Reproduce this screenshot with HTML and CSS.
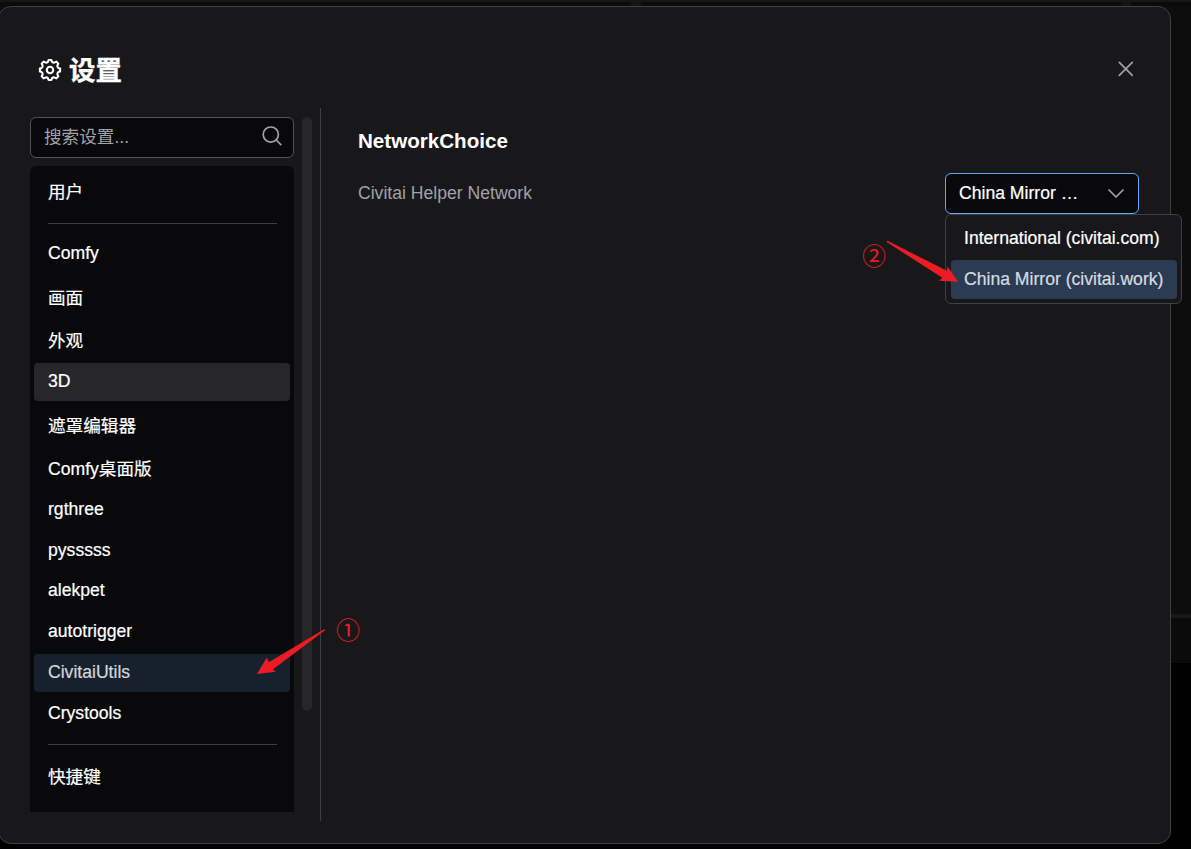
FILE: index.html
```html
<!DOCTYPE html>
<html lang="zh-CN">
<head>
<meta charset="utf-8">
<title>设置</title>
<link rel="stylesheet" href="styles.css">
</head>
<body>
<div class="backdrop">
  <div class="tabstrip"><i></i><i></i></div>
  <div class="canvas"></div>
  <div class="dock"></div>
</div>
<main class="dialog">
  <header class="dialog-header">
    <svg class="gear" width="24" height="24" viewBox="0 0 24 24"><path d="M9.9 4 L10.6 2 H13.4 L14.1 4 Q15.5 5.1 16.8 4.4 L18.4 3.6 L20.3 5.6 L19.5 7.2 Q18.9 9 20.3 9.9 L22.1 10.6 V13.4 L20.3 14.1 Q18.9 15 19.5 16.8 L20.3 18.4 L18.4 20.4 L16.8 19.6 Q15.5 18.9 14.1 20 L13.4 22 H10.6 L9.9 20 Q8.5 18.9 7.2 19.6 L5.6 20.4 L3.7 18.4 L4.5 16.8 Q5.1 15 3.7 14.1 L1.9 13.4 V10.6 L3.7 9.9 Q5.1 9 4.5 7.2 L3.7 5.6 L5.6 3.6 L7.2 4.4 Q8.5 5.1 9.9 4Z"/><circle cx="12" cy="12" r="3.2"/></svg>
    <h1>设置</h1>
    <svg class="close" width="16" height="16" viewBox="0 0 16 16"><path d="M2.3 1.3 15.3 14.3M15.3 1.3 2.3 14.3"/></svg>
  </header>
  <div class="dialog-body">
    <aside class="sidebar">
      <div class="search"><span>搜索设置...</span>
        <svg width="20" height="20" viewBox="0 0 20 20"><circle cx="8.8" cy="8.6" r="7.6"/><path d="M14.2 14 18.8 18.6"/></svg>
      </div>
      <ul class="menu">
        <li class="cjk">用户</li>
        <li class="divider"></li>
        <li>Comfy</li>
        <li class="cjk">画面</li>
        <li class="cjk">外观</li>
        <li class="hover">3D</li>
        <li class="cjk">遮罩编辑器</li>
        <li class="cjk">Comfy桌面版</li>
        <li>rgthree</li>
        <li>pysssss</li>
        <li>alekpet</li>
        <li>autotrigger</li>
        <li class="selected">CivitaiUtils</li>
        <li>Crystools</li>
        <li class="divider"></li>
        <li class="cjk">快捷键</li>
      </ul>
    </aside>
    <div class="scrollbar"></div>
    <section class="content">
      <h2>NetworkChoice</h2>
      <div class="setting">
        <label>Civitai Helper Network</label>
        <div class="select">
          <span>China Mirror …</span>
          <svg width="16" height="10" viewBox="0 0 16 10"><path d="M1 2 8 9 15 2"/></svg>
          <div class="options">
            <div class="option">International (civitai.com)</div>
            <div class="option chosen">China Mirror (civitai.work)</div>
          </div>
        </div>
      </div>
    </section>
  </div>
</main>
<svg class="arrows" width="1191" height="849" viewBox="0 0 1191 849">
  <path d="M324.5 629 324.8 630.5 273 669.3 275.8 671.8 257 674 266.8 657.5 268.8 662.3Z"/>
  <path d="M886.3 241.8 887.5 240.8 947 270.8 947.3 266 958 281.8 939 280.8 942.3 277.8Z"/>
</svg>
<span class="note note-one">①</span>
<span class="note note-two">②</span>
</body>
</html>
```
FILE: styles.css
```css
* { box-sizing: border-box; }
body {
  margin: 0;
  width: 1191px;
  height: 849px;
  overflow: hidden;
  position: relative;
  background: #000;
  color: #fff;
  font: 17.6px "Liberation Sans", "Noto Sans CJK SC", sans-serif;
}
.backdrop { position: absolute; inset: 0; display: flex; flex-direction: column; }
.tabstrip { height: 6px; background: #0b0b0b; border-top: 2px solid #171717; display: flex; padding-left: 631px; gap: 480px; }
.tabstrip i { width: 10px; background: #141415; }
.canvas { height: 608px; background: #0d0d0d; }
.dock { height: 49px; background: #0b0b0c; border-top: 4px solid #19191b; }
.dialog {
  position: absolute;
  left: -2px;
  top: 6px;
  width: 1173px;
  height: 838px;
  background: #18181a;
  border: 1px solid #3f3f46;
  border-radius: 13px;
}
.dialog-header { height: 101px; display: flex; align-items: center; padding: 25px 37px 0 39px; }
.gear { fill: none; stroke: #fff; stroke-width: 2.1; stroke-linejoin: round; margin-bottom: 1px; }
h1 { margin: 1px 0 0 7px; font-size: 26.4px; line-height: 30px; flex: 1; -webkit-text-stroke: 0.4px; }
.close { fill: none; stroke: #a1a1aa; stroke-width: 1.7; stroke-linecap: round; margin-bottom: 2px; }
.dialog-body { display: flex; height: 713px; }
.sidebar { width: 264px; margin: 9px 0 9px 31px; display: flex; flex-direction: column; gap: 8px; }
.search {
  height: 41px;
  flex: none;
  border: 1px solid #52525b;
  border-radius: 6px;
  background: #09090b;
  color: #a1a1aa;
  display: flex;
  align-items: center;
  justify-content: space-between;
  padding: 0 11px 3px 13px;
}
.search span { margin-bottom: 2px; }
.search svg { fill: none; stroke: #a1a1aa; stroke-width: 1.7; stroke-linecap: round; }
.menu {
  list-style: none;
  margin: 0;
  padding: 4.4px 4px 0;
  height: 646px;
  flex: none;
  overflow: hidden;
  background: #09090b;
  border-radius: 6px 6px 0 0;
}
.menu li { height: 38.2px; line-height: 37.4px; padding-left: 14px; margin-bottom: 2.6px; border-radius: 4px; -webkit-text-stroke: 0.2px; }
.menu li.cjk { height: 41px; line-height: 44px; }
.menu li.divider { height: 1px; background: #3f3f46; margin: 11.4px 13px 11px 14px; padding: 0; border-radius: 0; }
.menu li.cjk:last-child { line-height: 42.4px; }
.menu li.hover { background: #27272a; }
.menu li.selected { background: #17212e; color: #d4d5d8; }
.scrollbar { width: 10px; height: 594px; margin: 9px 8px 0; border-radius: 5px; background: #27272a; }
.content { flex: 1; border-left: 1px solid #3f3f46; padding: 20px 31px 0 37px; }
h2 { margin: 0; font-size: 20.6px; line-height: 26px; }
.setting { display: flex; justify-content: space-between; margin-top: 19px; }
.setting label { color: #a1a1aa; line-height: 40px; }
.select {
  position: relative;
  width: 194px;
  height: 41px;
  display: flex;
  align-items: center;
  justify-content: space-between;
  padding: 0 14px 1px 13px;
  border: 1px solid #60a5fa;
  border-radius: 6px;
  background: #09090b;
  -webkit-text-stroke: 0.2px;
}
.select > svg { fill: none; stroke: #a1a1aa; stroke-width: 1.7; stroke-linecap: round; stroke-linejoin: round; }
.options {
  position: absolute;
  left: -1px;
  top: 40px;
  width: 237px;
  height: 90px;
  padding: 4px;
  background: #18181a;
  border: 1px solid #3f3f46;
  border-radius: 6px;
}
.option { height: 39px; line-height: 38px; padding-left: 13px; margin-left: 1px; border-radius: 4px; white-space: nowrap; }
.option.chosen { margin-top: 2px; background: #2b3b52; color: #d7dbe0; }
.arrows { position: absolute; left: 0; top: 0; fill: #ed1c24; }
.note { position: absolute; color: #ed1c24; font: 24px/28px "Noto Sans CJK SC", sans-serif; }
.note-one { left: 336px; top: 615px; }
.note-two { left: 862px; top: 241px; }
```
